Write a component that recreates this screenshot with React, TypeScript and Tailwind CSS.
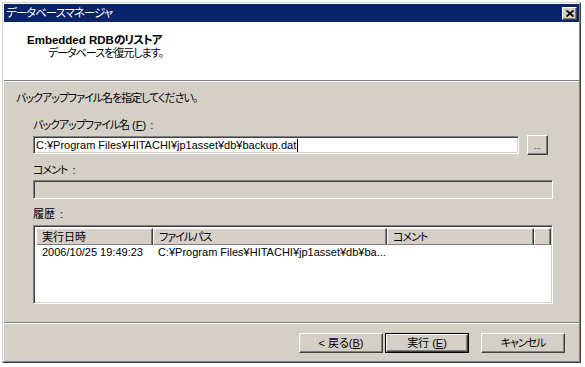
import React from "react";

function Raised({ className = "", children }: { className?: string; children?: React.ReactNode }) {
  return (
    <div
      className={
        "bg-[#d4d0c8] border border-t-white border-l-white border-r-[#404040] border-b-[#404040] shadow-[inset_-1px_-1px_0_#808080] flex items-center justify-center " +
        className
      }
    >
      {children}
    </div>
  );
}

function HeaderCell({ className = "", children }: { className?: string; children?: React.ReactNode }) {
  return (
    <div
      className={
        "h-full bg-[#d4d0c8] border-t border-l border-t-white border-l-white border-r border-r-[#404040] shadow-[inset_-1px_-1px_0_#808080] flex items-center pl-[5px] overflow-hidden whitespace-nowrap " +
        className
      }
    >
      {children}
    </div>
  );
}

function J({ children, className = "" }: { children?: React.ReactNode; className?: string }) {
  return <span className={"tracking-[-1px] " + className}>{children}</span>;
}

export default function App() {
  return (
    <div className="w-[585px] h-[367px] bg-white pt-[2px] pl-[2px] font-['Liberation_Sans','Noto_Sans_CJK_JP',sans-serif] [font-feature-settings:'palt'] text-[11px] leading-[12px] text-black">
      <div className="w-[579px] h-[361px] border border-t-[#d4d0c8] border-l-[#d4d0c8] border-r-[#404040] border-b-[#404040]">
        <div className="h-full border border-t-white border-l-white border-r-[#808080] border-b-[#808080] bg-[#d4d0c8] flex flex-col">
          {/* title bar */}
          <div className="h-[18px] shrink-0 bg-[#0a246a] flex items-center justify-between pl-[2px] pr-[2px]">
            <J className="text-white text-[11.5px] tracking-[-0.6px]">データベースマネージャ</J>
            <Raised className="w-[15px] h-[13px]">
              <svg width="8" height="7" viewBox="0 0 8 7">
                <path d="M0.5 0.5 L7.5 6.5 M7.5 0.5 L0.5 6.5" stroke="black" strokeWidth="1.8" />
              </svg>
            </Raised>
          </div>

          {/* header */}
          <div className="h-[58px] shrink-0 bg-white pt-[12px] pl-[23px]">
            <div className="font-bold text-[11.5px] leading-[12px]">
              Embedded RDB<J className="tracking-[-0.5px]">のリストア</J>
            </div>
            <div className="pl-[21px] mt-[1px]">
              <J className="tracking-[-1.4px]">データベースを復元します。</J>
            </div>
          </div>
          <div className="h-[1px] shrink-0 bg-[#808080]" />
          <div className="h-[1px] shrink-0 bg-white" />

          {/* body */}
          <div className="flex-1 flex flex-col pt-[10px]">
            <div className="pl-[12px]">
              <J className="tracking-[-1.2px]">バックアップファイル名を指定してください。</J>
            </div>
            <div className="pl-[29px] flex flex-col">
              <div className="mt-[15px] whitespace-nowrap">
                <J className="tracking-[-0.6px]">バックアップファイル名</J> (<span className="underline">F</span>)
                <span className="ml-[4px]">:</span>
              </div>
              <div className="mt-[4px] flex items-center">
                <div className="w-[486px] h-[18px] bg-white border border-t-[#808080] border-l-[#808080] border-r-white border-b-white shadow-[inset_1px_1px_0_#404040,inset_-1px_-1px_0_#d4d0c8] flex items-center pl-[2px] whitespace-nowrap">
                  <span>C:¥Program Files¥HITACHI¥jp1asset¥db¥backup.dat</span>
                  <span className="w-[1px] h-[13px] bg-black ml-[1px]" />
                </div>
                <Raised className="ml-[8px] w-[21px] h-[20px]">
                  <span className="text-[8px] leading-[8px] mt-[3px]">...</span>
                </Raised>
              </div>
              <div className="mt-[9px]">
                <J>コメント</J> <span className="ml-[2px]">:</span>
              </div>
              <div className="mt-[4px] w-[520px] h-[19px] bg-[#d4d0c8] border border-t-[#808080] border-l-[#808080] border-r-white border-b-white shadow-[inset_1px_1px_0_#404040,inset_-1px_-1px_0_#d4d0c8]" />
              <div className="mt-[9px]">
                履歴 <span className="ml-[2px]">:</span>
              </div>
              <div className="mt-[5px] w-[520px] h-[79px] bg-white border border-t-[#808080] border-l-[#808080] border-r-white border-b-white shadow-[inset_1px_1px_0_#404040,inset_-1px_-1px_0_#d4d0c8] p-[2px] pr-[1px] pb-[1px] flex flex-col">
                <div className="h-[17px] flex shrink-0">
                  <HeaderCell className="w-[117px]">実行日時</HeaderCell>
                  <HeaderCell className="w-[234px]">
                    <J>ファイルパス</J>
                  </HeaderCell>
                  <HeaderCell className="w-[147px]">
                    <J>コメント</J>
                  </HeaderCell>
                  <HeaderCell className="flex-1" />
                </div>
                <div className="flex h-[13px] items-center whitespace-nowrap">
                  <div className="w-[117px] pl-[6px]">2006/10/25 19:49:23</div>
                  <div className="w-[234px] pl-[5px]">C:¥Program Files¥HITACHI¥jp1asset¥db¥ba...</div>
                </div>
              </div>
            </div>
          </div>

          {/* separator */}
          <div className="h-[1px] shrink-0 bg-[#808080]" />
          <div className="h-[1px] shrink-0 bg-white" />

          {/* footer */}
          <div className="h-[37px] shrink-0 flex justify-end items-start pt-[9px] pr-[14px]">
            <Raised className="w-[84px] h-[20px]">
              &lt; 戻る(<span className="underline">B</span>)
            </Raised>
            <div className="ml-[2px] w-[84px] h-[20px] border border-black flex">
              <Raised className="flex-1 h-full">
                実行 (<span className="underline">E</span>)
              </Raised>
            </div>
            <Raised className="ml-[12px] w-[84px] h-[20px]">
              <J className="tracking-[-0.5px]">キャンセル</J>
            </Raised>
          </div>
        </div>
      </div>
    </div>
  );
}
